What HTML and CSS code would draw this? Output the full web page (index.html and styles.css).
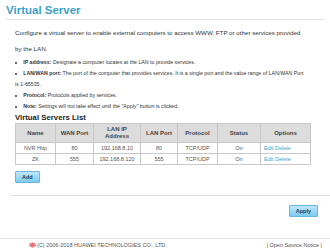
FILE: index.html
```html
<!DOCTYPE html>
<html lang="en">
<head>
    <meta charset="UTF-8">
    <meta name="viewport" content="width=device-width, initial-scale=1.0">
    <title>Virtual Server</title>
    <link rel="stylesheet" href="styles.css">
</head>
<body>
    <h1 class="title">Virtual Server</h1>

    <div class="content">
        <p class="intro">Configure a virtual server to enable external computers to access WWW, FTP or other services provided by the LAN.</p>
        <ul class="notes">
            <li><b>IP address:</b> Designate a computer locates at the LAN to provide services.</li>
            <li><b>LAN/WAN port:</b> The port of the computer that provides services. It is a single port and the value range of LAN/WAN Port is 1-65535.</li>
            <li><b>Protocol:</b> Protocols applied by services.</li>
            <li><b>Note:</b> Settings will not take effect until the "Apply" button is clicked.</li>
        </ul>

        <h2 class="list-title">Virtual Servers List</h2>
        <table class="servers">
            <tr>
                <th class="c-name">Name</th>
                <th class="c-wan">WAN Port</th>
                <th class="c-ip">LAN IP Address</th>
                <th class="c-lan">LAN Port</th>
                <th class="c-proto">Protocol</th>
                <th class="c-status">Status</th>
                <th class="c-opt">Options</th>
            </tr>
            <tr>
                <td>NVR Http</td>
                <td>80</td>
                <td>192.168.8.10</td>
                <td>80</td>
                <td>TCP/UDP</td>
                <td>On</td>
                <td class="opts"><a href="#">Edit</a> <a href="#">Delete</a></td>
            </tr>
            <tr>
                <td>ZK</td>
                <td>555</td>
                <td>192.168.8.120</td>
                <td>555</td>
                <td>TCP/UDP</td>
                <td>On</td>
                <td class="opts"><a href="#">Edit</a> <a href="#">Delete</a></td>
            </tr>
        </table>
        <button class="btn">Add</button>
    </div>

    <div class="apply-row">
        <button class="btn">Apply</button>
    </div>

    <div class="footer">
        <div class="copy">
            <svg class="logo" width="7" height="6" viewBox="0 0 14 12">
                <path d="M7 12 L5.2 3 Q5.5 0.5 6.6 0.3 Z" fill="#d7000f"/>
                <path d="M7 12 L8.8 3 Q8.5 0.5 7.4 0.3 Z" fill="#d7000f"/>
                <path d="M7 12 L2.5 4 Q2.6 2 3.6 1.6 Z" fill="#d7000f"/>
                <path d="M7 12 L11.5 4 Q11.4 2 10.4 1.6 Z" fill="#d7000f"/>
                <path d="M7 12 L0.3 6.5 Q0.3 5 1 4.5 Z" fill="#d7000f"/>
                <path d="M7 12 L13.7 6.5 Q13.7 5 13 4.5 Z" fill="#d7000f"/>
            </svg>
            <span>(C) 2006-2018 HUAWEI TECHNOLOGIES CO., LTD.</span>
        </div>
        <div class="notice">| Open Source Notice |</div>
    </div>
</body>
</html>
```

FILE: styles.css
```css
body {
    margin: 0;
    font-family: "Liberation Sans", Arial, sans-serif;
    color: #333;
    background-color: white;
}
.title {
    margin: 0 5px;
    padding: 3px 1px 2px;
    font-size: 11.5px;
    line-height: 14px;
    font-weight: bold;
    color: #3c9fc8;
    border-bottom: 1px solid #e3e3e3;
}
.content {
    padding: 0 20px 0 15px;
}
.intro {
    margin: 5px 8px 0 0;
    font-size: 6.2px;
    line-height: 16px;
}
.notes {
    margin: 0 5px 0 0;
    padding-left: 0;
    list-style-position: inside;
    font-size: 5.25px;
    line-height: 11px;
}
.list-title {
    margin: 0;
    font-size: 7.8px;
    line-height: 11px;
    font-weight: bold;
    color: #222;
}
.servers {
    width: 295px;
    table-layout: fixed;
    border-collapse: collapse;
    font-size: 5.5px;
    color: #555;
}
.servers th,
.servers td {
    box-sizing: border-box;
    border: 1px solid #c8c8c8;
    text-align: center;
    padding: 0;
    height: 11px;
    white-space: nowrap;
}
.servers th {
    background-color: #dcdcdc;
    color: #444;
    height: 19px;
    padding: 0 2px;
    font-size: 6px;
    line-height: 7px;
    font-weight: bold;
    white-space: normal;
}
.c-name { width: 40px; }
.c-wan { width: 38px; }
.c-ip { width: 47px; }
.c-lan { width: 37px; }
.c-proto { width: 40px; }
.c-status { width: 43px; }
.c-opt { width: 50px; }
.servers td.opts {
    text-align: left;
    padding-left: 3px;
}
.opts a {
    color: #3c9fc8;
    text-decoration: none;
}
.btn {
    font-family: "Liberation Sans", Arial, sans-serif;
    font-size: 5.5px;
    font-weight: bold;
    color: #1c3a5a;
    background: linear-gradient(#bfe6fa, #7ccbf0);
    border: 1px solid #6fb6dc;
    border-radius: 1px;
    padding: 2px 6px;
    margin-top: 6px;
}
.apply-row {
    display: flex;
    justify-content: flex-end;
    margin: 12px 0 0 10px;
    padding: 3px 12px 0 0;
    border-top: 1px solid #e0e0e0;
}
.footer {
    display: flex;
    justify-content: space-between;
    align-items: center;
    margin-top: 21px;
    border-top: 1px solid #e3e3e3;
    padding: 3px 8px 0 29px;
    font-size: 5.5px;
    color: #555;
}
.copy {
    display: flex;
    align-items: center;
    gap: 1px;
}
```
